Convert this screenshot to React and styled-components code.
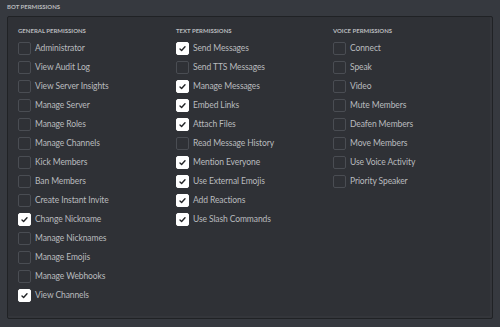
import React from "react";
import styled, { createGlobalStyle } from "styled-components";

const Global = createGlobalStyle`
  html, body { margin: 0; padding: 0; background: #36393f; }
  body { font-family: Lato, "Open Sans", sans-serif; }
`;

const Page = styled.div`
  width: 500px;
  height: 327px;
  box-sizing: border-box;
  background: #36393f;
  padding: 2px 7px 0 7px;
  display: flex;
  flex-direction: column;
`;

const Title = styled.div`
  font-size: 6px;
  line-height: 10px;
  font-weight: 700;
  color: #b9bbbe;
  text-transform: uppercase;
  margin-bottom: 4px;
`;

const Panel = styled.div`
  width: 486px;
  height: 303px;
  box-sizing: border-box;
  background: #2f3136;
  border: 1px solid #202225;
  box-shadow: inset -2px -2px 0 #34363b;
  border-radius: 2px;
  padding: 9px 10px;
  display: grid;
  grid-template-columns: 158px 157px 1fr;
`;

const Column = styled.div`
  display: flex;
  flex-direction: column;
`;

const Header = styled.div`
  font-size: 6px;
  line-height: 10px;
  font-weight: 700;
  color: #b9bbbe;
  text-transform: uppercase;
  margin-bottom: 6px;
`;

const List = styled.div`
  display: flex;
  flex-direction: column;
  gap: 6px;
`;

const Row = styled.div`
  display: flex;
  align-items: center;
  gap: 4px;
  height: 13px;
`;

const Box = styled.div`
  width: 13px;
  height: 13px;
  box-sizing: border-box;
  border-radius: 2px;
  border: 1px solid ${(p) => (p.$checked ? "#ffffff" : "#4a4d53")};
  background: ${(p) => (p.$checked ? "#ffffff" : "transparent")};
  display: flex;
  align-items: center;
  justify-content: center;
  flex-shrink: 0;
`;

const Label = styled.span`
  font-size: 8.5px;
  line-height: 13px;
  letter-spacing: -0.1px;
  color: #b9bbbe;
  white-space: nowrap;
`;

const Check = () => (
  <svg width="9" height="9" viewBox="0 0 9 9">
    <path d="M2 4.9 L3.6 6.4 L7 2.8" fill="none" stroke="#202225" strokeWidth="1.4" strokeLinecap="round" strokeLinejoin="round" />
  </svg>
);

const columns = [
  {
    title: "General Permissions",
    items: [
      ["Administrator", false],
      ["View Audit Log", false],
      ["View Server Insights", false],
      ["Manage Server", false],
      ["Manage Roles", false],
      ["Manage Channels", false],
      ["Kick Members", false],
      ["Ban Members", false],
      ["Create Instant Invite", false],
      ["Change Nickname", true],
      ["Manage Nicknames", false],
      ["Manage Emojis", false],
      ["Manage Webhooks", false],
      ["View Channels", true],
    ],
  },
  {
    title: "Text Permissions",
    items: [
      ["Send Messages", true],
      ["Send TTS Messages", false],
      ["Manage Messages", true],
      ["Embed Links", true],
      ["Attach Files", true],
      ["Read Message History", false],
      ["Mention Everyone", true],
      ["Use External Emojis", true],
      ["Add Reactions", true],
      ["Use Slash Commands", true],
    ],
  },
  {
    title: "Voice Permissions",
    items: [
      ["Connect", false],
      ["Speak", false],
      ["Video", false],
      ["Mute Members", false],
      ["Deafen Members", false],
      ["Move Members", false],
      ["Use Voice Activity", false],
      ["Priority Speaker", false],
    ],
  },
];

export default function App() {
  return (
    <>
      <Global />
      <Page>
        <Title>Bot Permissions</Title>
        <Panel>
          {columns.map((col) => (
            <Column key={col.title}>
              <Header>{col.title}</Header>
              <List>
                {col.items.map(([name, checked]) => (
                  <Row key={name}>
                    <Box $checked={checked}>{checked && <Check />}</Box>
                    <Label>{name}</Label>
                  </Row>
                ))}
              </List>
            </Column>
          ))}
        </Panel>
      </Page>
    </>
  );
}
